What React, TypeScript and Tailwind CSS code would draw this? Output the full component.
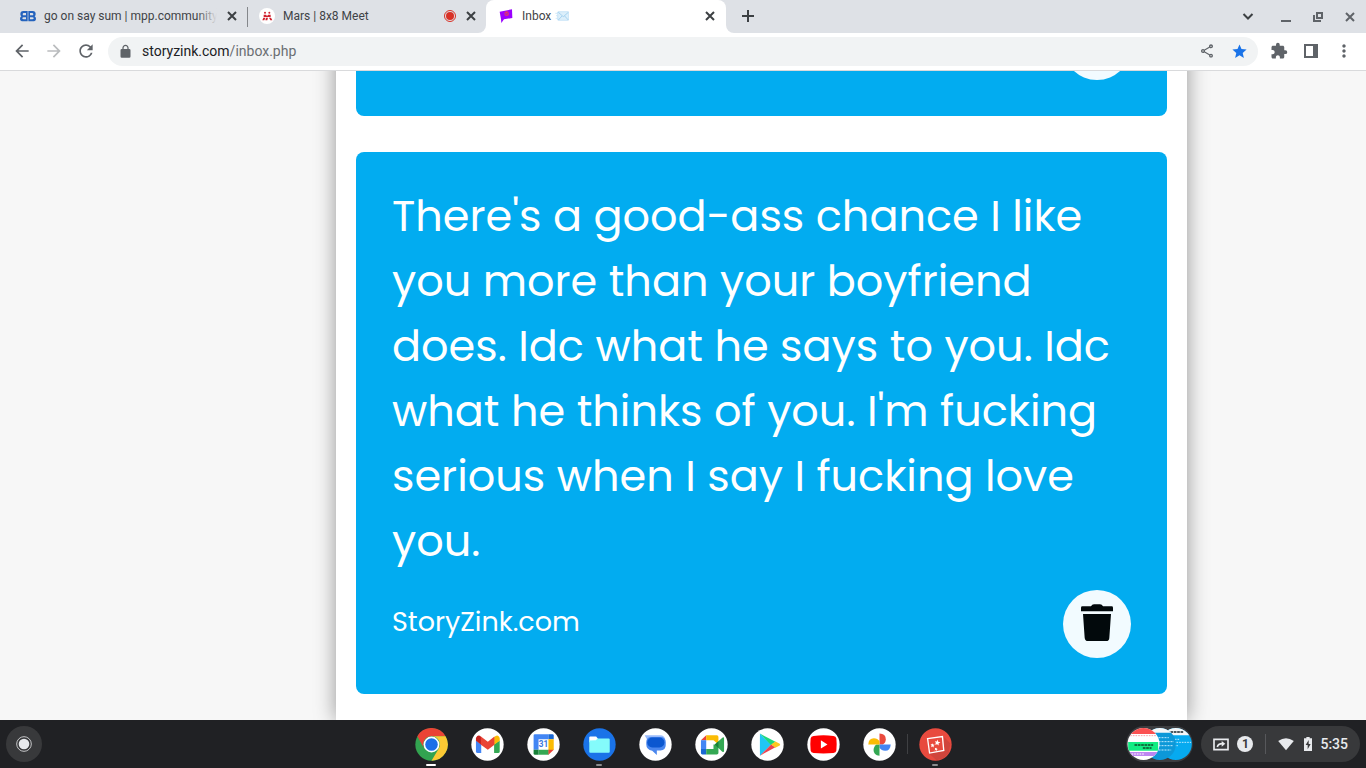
import type { ReactNode } from "react";
import {
  MdArrowBack,
  MdArrowForward,
  MdExtension,
  MdLock,
  MdMoreVert,
  MdOutlineShare,
  MdRefresh,
  MdStar,
} from "react-icons/md";

type TabProps = {
  title: string;
  icon: ReactNode;
  extra?: ReactNode;
  recording?: boolean;
  faded?: boolean;
};

type ShelfApp = {
  name: string;
  icon: ReactNode;
  indicator?: "active" | "running";
};

type StoryCardProps = {
  message?: string;
  label?: string;
};

/* Favicons */

const BBFavicon = () => (
  <svg viewBox="0 0 48 48" className="size-4 shrink-0">
    <path
      fill="#2463bd"
      fillRule="evenodd"
      d="M23 9v31H10q-10 0-10-8 0-5 4-7-3-2-3-7 0-9 9-9zM18 15h-6q-4 0-4 3.500t4 3.500h6zM18 28h-7q-4 0-4 3t4 3h7zM25 9v31h13q10 0 10-8 0-5-4-7 3-2 3-7 0-9-9-9zM30 15h6q4 0 4 3.500t-4 3.500h-6zM30 28h7q4 0 4 3t-4 3h-7z"
    />
  </svg>
);

const MeetFavicon = () => (
  <svg viewBox="0 0 48 48" className="size-4 shrink-0">
    <circle cx="24" cy="24" r="24" fill="#fff" />
    <g fill="#d0202e">
      <circle cx="18" cy="14" r="3" />
      <circle cx="31" cy="14" r="3" />
      <path d="M14 20h7l3 4 4-4h7v7H14zM13 29h6l-3 8h-6zM21 29h6l-2 8h-6zM30 29h6l4 8h-6z" />
    </g>
  </svg>
);

const ZinkFavicon = () => (
  <svg viewBox="0 0 48 48" className="size-4 shrink-0">
    <path d="M5 11 42 4l1 26-25 4-8 11-1-11z" fill="#9a00ff" />
    <circle cx="26" cy="17" r="7" fill="#e8306c" />
    <path d="m22 14 3 7 6-8" fill="none" stroke="#7d22e0" strokeWidth="2" />
  </svg>
);

const EnvelopeIcon = () => (
  <svg viewBox="0 0 42 30" className="h-[10px] w-[14px] shrink-0">
    <rect x="8" y="2" width="33" height="26" rx="2" fill="#dceffb" stroke="#b9ddf5" strokeWidth="2" />
    <path d="m10 4 15 13L40 4M10 27l11-12M40 27 29 15" fill="none" stroke="#8cc4ea" strokeWidth="2" />
    <path d="M1 7h6M3 14h4M2 22h5" stroke="#b9ddf5" strokeWidth="2" />
  </svg>
);

const Tab = ({ title, icon, extra, recording, faded }: TabProps) => (
  <div className="flex h-full w-[239px] items-center gap-2 pr-2 pb-px pl-3">
    {icon}
    <div className="relative flex min-w-0 flex-1 items-center gap-1 overflow-hidden pb-px text-xs whitespace-nowrap text-[#3f4347]">
      <span>{title}</span>
      {extra}
      {faded && (
        <div className="absolute inset-y-0 right-0 w-5 bg-linear-to-r from-transparent to-[#dee1e6]" />
      )}
    </div>
    {recording && (
      <svg viewBox="0 0 24 24" className="size-3 shrink-0">
        <circle cx="12" cy="12" r="11" fill="none" stroke="#d93025" strokeWidth="2" />
        <circle cx="12" cy="12" r="8" fill="#d93025" />
      </svg>
    )}
    <button aria-label={`Close ${title}`} className="shrink-0">
      <svg viewBox="0 0 14 14" className="size-3.5">
        <path d="m3 3 8 8M11 3l-8 8" stroke="#3c4043" strokeWidth="2" />
      </svg>
    </button>
  </div>
);

const TabStrip = () => (
  <div className="flex h-[33px] w-full bg-white">
    <div className="flex rounded-br-lg bg-[#dee1e6] pl-2">
      <Tab title="go on say sum | mpp.community" icon={<BBFavicon />} faded />
      <div className="-mr-px h-5 w-px self-center bg-[#84878b]" />
      <Tab title="Mars | 8x8 Meet" icon={<MeetFavicon />} recording />
    </div>
    <div className="bg-linear-to-b from-[#dee1e6] from-50% to-white to-50%">
      <div className="h-full rounded-t-lg bg-white pr-px">
        <Tab title="Inbox" icon={<ZinkFavicon />} extra={<EnvelopeIcon />} />
      </div>
    </div>
    <div className="flex flex-1 items-center justify-between rounded-bl-lg bg-[#dee1e6] pr-2 pb-px pl-4">
      <button aria-label="New tab">
        <svg viewBox="0 0 12 12" className="size-3">
          <path d="M6 0v12M0 6h12" stroke="#3c4043" strokeWidth="2" />
        </svg>
      </button>
      <div className="flex items-center text-[#5f6368]">
        <button aria-label="Search tabs" className="mr-[22px]">
          <svg viewBox="0 0 16 16" className="size-4">
            <path d="m3.500 6 4.500 4.500L12.500 6" fill="none" stroke="#3c4043" strokeWidth="2" />
          </svg>
        </button>
        <button aria-label="Minimize" className="mr-4">
          <svg viewBox="0 0 16 16" className="size-4">
            <path d="M3 13h10" stroke="currentColor" strokeWidth="2" />
          </svg>
        </button>
        <button aria-label="Restore" className="mr-4">
          <svg viewBox="0 0 16 16" className="size-4" fill="none" stroke="currentColor" strokeWidth="2">
            <path d="M7 5h5v5H7zM4 7v6h7" />
          </svg>
        </button>
        <button aria-label="Close window">
          <svg viewBox="0 0 16 16" className="size-4">
            <path d="m4 5 8 8M12 5l-8 8" stroke="currentColor" strokeWidth="2" />
          </svg>
        </button>
      </div>
    </div>
  </div>
);

const Toolbar = () => (
  <div className="flex h-[38px] items-center border-b border-[#d9dadc] bg-white px-3 text-[#5f6368]">
    <div className="flex gap-3 pb-px">
      <button aria-label="Back">
        <MdArrowBack size={20} />
      </button>
      <button aria-label="Forward" className="text-[#babcbe]">
        <MdArrowForward size={20} />
      </button>
      <button aria-label="Reload">
        <MdRefresh size={20} />
      </button>
    </div>
    <div className="ml-3 flex h-[29px] min-w-0 flex-1 items-center rounded-full bg-[#f1f3f4] px-2.5 pb-px">
      <svg viewBox="0 0 24 24" className="size-[15px]" fill="currentColor">
        <path
          fillRule="evenodd"
          d="M18 8h-1V6c0-2.760-2.240-5-5-5S7 3.240 7 6v2H6a2 2 0 0 0-2 2v10a2 2 0 0 0 2 2h12a2 2 0 0 0 2-2V10a2 2 0 0 0-2-2M9 8V6a3 3 0 0 1 6 0v2z"
        />
      </svg>
      <div className="ml-[9px] flex-1 text-sm text-[#6a6e72]">
        <span className="text-[#202124]">storyzink.com</span>/inbox.php
      </div>
      <div className="flex items-center gap-4">
        <button aria-label="Share">
          <MdOutlineShare size={16} />
        </button>
        <button aria-label="Bookmark" className="text-[#1a73e8]">
          <MdStar size={17} />
        </button>
      </div>
    </div>
    <div className="ml-3 flex items-center gap-4 pb-px">
      <button aria-label="Extensions">
        <MdExtension size={18} />
      </button>
      <button aria-label="Side panel">
        <svg viewBox="0 0 14 14" className="size-3.5">
          <path fill="currentColor" fillRule="evenodd" d="M0 0h14v14H0zM2 2v10h7V2z" />
        </svg>
      </button>
      <button aria-label="Menu">
        <MdMoreVert size={20} />
      </button>
    </div>
  </div>
);

const StoryCard = ({ message, label }: StoryCardProps) => (
  <article className="rounded-lg bg-[#02acf0] px-9 pt-8 pb-9 text-white">
    {message && <p className="text-[43px] leading-[65px]">{message}</p>}
    <div className="mt-4 flex items-start justify-between">
      <span className="pt-3 text-[27px] leading-10">{label}</span>
      <button
        aria-label="Delete story"
        className="flex size-[68px] items-center justify-center rounded-full bg-[#f2fbff]"
      >
        <svg viewBox="0 0 96 111" className="mb-1 h-[37px] w-8" fill="#02090c">
          <path d="M30 7q3-6 9-6h18q6 0 9 6h26q4 0 4 4v11H0V11q0-4 4-4zM6 30h84l-5 71q0 10-10 10H21q-9 0-10-10z" />
        </svg>
      </button>
    </div>
  </article>
);

/* Shelf icons, all drawn in a 100 unit circle */

const Disc = ({ fill = "#fff", children }: { fill?: string; children: ReactNode }) => (
  <svg viewBox="0 0 100 100" className="size-[33px]">
    <circle cx="50" cy="50" r="49" fill={fill} />
    {children}
  </svg>
);

const shelfApps: ShelfApp[] = [
  {
    name: "Chrome",
    indicator: "active",
    icon: (
      <Disc fill="#32a350">
        <path fill="#ea4335" d="M50 25h42.500A49 49 0 0 0 7 25l21.300 37.500A25 25 0 0 1 50 25" />
        <path fill="#fcc934" d="M71.700 62.500 50 99a49 49 0 0 0 42.500-74H50a25 25 0 0 1 21.700 37.500" />
        <circle cx="50" cy="50" r="24" fill="#fff" />
        <circle cx="50" cy="50" r="19" fill="#1a6fe8" />
      </Disc>
    ),
  },
  {
    name: "Gmail",
    icon: (
      <Disc>
        <path fill="#4285f4" d="M15 38l16 11v27H20q-5 0-5-5z" />
        <path fill="#34a853" d="M87 38 70 49v27h12q5 0 5-5z" />
        <path fill="#fbbc04" d="M70 28q7-8 13-4 4 3 4 8v7L70 51z" />
        <path fill="#c5221f" d="M15 39v-7q0-5 4-8 6-3 12 3v24z" />
        <path fill="#ea4335" d="m30 26 21 16 20-16v25L51 66 30 51z" />
      </Disc>
    ),
  },
  {
    name: "Calendar",
    icon: (
      <Disc>
        <path fill="#4285f4" d="M20 23q0-4 4-4h41v15H35v32H20z" />
        <path fill="#1967d2" d="M65 19h12q4 0 4 4v11H65z" />
        <path fill="#fbbc04" d="M65 34h16v33H65z" />
        <path fill="#34a853" d="M35 66h31v15H35z" />
        <path fill="#188038" d="M20 66h15v15H24q-4 0-4-4z" />
        <path fill="#ea4335" d="M65 66h16L65 81z" />
        <text x="50" y="59" fill="#3b78e0" fontSize="25" fontWeight="700" textAnchor="middle" fontFamily="Roboto, sans-serif">
          31
        </text>
      </Disc>
    ),
  },
  {
    name: "Files",
    indicator: "running",
    icon: (
      <Disc fill="#1a73e8">
        <path fill="#fff" d="M19 29q0-3 3-3h18l6 7-5 10H19z" />
        <path fill="#84fbfb" d="M19 38l20-1 5-5h34q3 0 3 3v37q0 3-3 3H22q-3 0-3-3z" />
      </Disc>
    ),
  },
  {
    name: "Messages",
    icon: (
      <Disc>
        <path fill="#9bbcfb" d="M17 22h46q17 0 17 17v4q0 16-16 16H40Q24 59 24 43V34z" />
        <path fill="#4a87ee" d="M38 27h27q16 0 16 17v8q0 14-16 16H54v14L40 69q-18-4-18-20v-6q0-16 16-16" />
        <rect x="25" y="29" width="52" height="30" rx="15" fill="#0b57d0" />
      </Disc>
    ),
  },
  {
    name: "Meet",
    icon: (
      <Disc>
        <path fill="#ea4335" d="M34 22v15H18z" />
        <path fill="#4285f4" d="M18 37h16v27H18z" />
        <path fill="#1967d2" d="M18 64h16v16H22q-4 0-4-4z" />
        <path fill="#fbbc04" d="M34 22h32q5 0 5 5v23L56 37H34z" />
        <path fill="#34a853" d="M56 50h15v26q0 4-5 4H34V64h22z" />
        <path fill="#34a853" d="m60 50 22-20q6-4 6 2v37q0 6-6 2z" />
        <path fill="#188038" d="M60 50 71 40v21z" />
      </Disc>
    ),
  },
  {
    name: "Play Store",
    icon: (
      <Disc>
        <path fill="#20c6f5" d="M27 17v67l34-34z" />
        <path fill="#1fd87e" d="m27 17 47 25-13 10z" />
        <path fill="#ea4351" d="m27 84 47-26-13-8z" />
        <path fill="#fcc81f" d="m74 41 13 7q3 3 0 5l-13 7-13-10z" />
      </Disc>
    ),
  },
  {
    name: "YouTube",
    icon: (
      <Disc>
        <path fill="#f00" d="M20 24q30-4 60 0 8 1 9 8 2 18 0 36-1 7-9 8-30 3-60 0-8-1-9-8-2-18 0-36 1-7 9-8" />
        <path fill="#fff" d="M42 37v25l20-12z" />
      </Disc>
    ),
  },
  {
    name: "Photos",
    icon: (
      <Disc>
        <path fill="#ea4b3e" d="M50 17q19 1 19 17 0 11-9 16H50z" />
        <path fill="#4285f4" d="M84 50q-1 19-17 19-11 0-17-9V50z" />
        <path fill="#34a853" d="M50 84q-18-1-18-17 0-11 9-17h9z" />
        <path fill="#fbbc04" d="M16 50q1-19 17-19 11 0 17 9v10z" />
      </Disc>
    ),
  },
  {
    name: "Sketch pad",
    indicator: "running",
    icon: (
      <Disc fill="#e84a3e">
        <path fill="#b8403a" opacity=".5" d="m76 27 19 20-5 28-15 16-22 7-25-23 49-4z" />
        <path fill="none" stroke="#fff" strokeWidth="4" d="m26 32 45-6 4 42-43 8z" />
        <g fill="#fff">
          <path d="m56 35 2 7 7 1-6 4 1 6-5-4-6 2 2-6-3-5 6 1zM41 46l2 4 5 1-4 3 1 5-4-3-4 2 1-5-3-4h5zM52 60l2 3 3 1-3 2v4l-3-3-4 1 2-3-1-4z" />
        </g>
      </Disc>
    ),
  },
];

// Recent screenshots stack shown in the holding space
const HoldingSpace = () => (
  <svg viewBox="0 0 200 108" className="h-9 w-[67px]">
    <rect width="200" height="108" rx="54" fill="#3c3d40" />
    <clipPath id="previewBack">
      <circle cx="149" cy="54" r="48" />
    </clipPath>
    <clipPath id="previewMiddle">
      <circle cx="101" cy="54" r="48" />
    </clipPath>
    <clipPath id="previewFront">
      <circle cx="52" cy="54" r="48" />
    </clipPath>
    <g clipPath="url(#previewBack)">
      <path fill="#06aaf0" d="M100 0h100v108H100z" />
      <path fill="#f5f7f8" d="M100 0h100v28H120z" />
      <path stroke="#17262d" strokeWidth="5" strokeDasharray="8 2" d="M133 18h40" />
      <path stroke="#bfeaff" strokeWidth="3" strokeDasharray="5 3" d="M130 40h30M135 49h60M135 59h20" />
    </g>
    <g clipPath="url(#previewMiddle)">
      <path fill="#0d98d8" d="M50 0h100v108H50z" />
      <path fill="#f5f7f8" d="M50 0h100v20H50z" />
      <path stroke="#bfeaff" strokeWidth="3" strokeDasharray="6 3" d="M97 35h31M97 47h46M97 59h42M97 72h38" />
    </g>
    <g clipPath="url(#previewFront)">
      <path fill="#fff" d="M0 0h104v108H0z" />
      <path fill="#fb5151" d="M0 0h104v24H0z" />
      <path stroke="#f6a2a8" strokeWidth="3" strokeDasharray="5 3" d="M12 29h80" />
      <path fill="#13ec83" d="M6 48h90v26H6z" />
      <path stroke="#114a2c" strokeWidth="5" strokeDasharray="8 2" d="M25 57h56M50 66h26" />
      <path fill="#bd86f1" d="M0 78h104v12H0z" />
      <path stroke="#fff" strokeWidth="3" strokeDasharray="5 3" d="M16 84h40" />
    </g>
  </svg>
);

const Shelf = () => (
  <footer className="grid h-12 shrink-0 grid-cols-[1fr_auto_1fr] items-center bg-[#202124] px-1.5">
    <button
      aria-label="Launcher"
      className="flex size-9 items-center justify-center rounded-full bg-[#38393b]"
    >
      <svg viewBox="0 0 48 48" className="size-4">
        <circle cx="24" cy="24" r="22" fill="none" stroke="#c4c5c7" strokeWidth="3" />
        <circle cx="24" cy="24" r="16" fill="#e8eaed" />
      </svg>
    </button>
    <nav className="flex h-full items-center">
      {shelfApps.map((app, index) => (
        <div key={app.name} className="relative flex h-full items-center">
          {index === shelfApps.length - 1 && <div className="absolute left-0 h-5 w-px bg-[#3f4043]" />}
          <button aria-label={app.name} className="flex w-14 justify-center">
            {app.icon}
          </button>
          {app.indicator === "active" && (
            <div className="absolute bottom-0.5 left-1/2 h-0.5 w-2.5 -translate-x-1/2 rounded-full bg-white" />
          )}
          {app.indicator === "running" && (
            <div className="absolute bottom-0.5 left-1/2 h-0.5 w-1.5 -translate-x-1/2 rounded-full bg-[#8c8d8f]" />
          )}
        </div>
      ))}
    </nav>
    <div className="flex items-center justify-end gap-2">
      <button aria-label="Recent screen captures">
        <HoldingSpace />
      </button>
      <button className="flex h-9 items-center rounded-full bg-[#38393b] px-3 text-[#e8eaed]">
        <svg viewBox="0 0 48 39" className="h-[13px] w-4" fill="none" stroke="#e8eaed" strokeWidth="5">
          <path d="M3 4h42v31H3z" />
          <path d="M13 27q2-10 15-10" />
          <path d="m26 9 11 8-11 9z" fill="#e8eaed" stroke="none" />
        </svg>
        <span className="ml-2 flex size-4 items-center justify-center rounded-full bg-[#e8eaed] text-xs font-bold text-[#38393b]">
          1
        </span>
        <span className="mx-3 h-5 w-px bg-[#57585b]" />
        <svg viewBox="0 0 48 40" className="h-[13px] w-4" fill="#e8eaed">
          <path d="M0 9Q24-8 48 9L24 38z" />
        </svg>
        <svg viewBox="0 0 24 42" className="ml-2.5 h-3.5 w-2" fill="#e8eaed">
          <path
            fillRule="evenodd"
            d="M7 0h10v4h7v38H0V4h7zM14 9 5 24h6v13l9-16h-6z"
          />
        </svg>
        <span className="ml-2 text-sm font-medium">5:35</span>
      </button>
    </div>
  </footer>
);

const App = () => {
  return (
    <div className="flex h-screen flex-col overflow-hidden bg-[#f7f7f7] font-[Roboto,sans-serif]">
      <header className="relative z-10 shrink-0">
        <TabStrip />
        <Toolbar />
      </header>

      <main className="grid min-h-0 flex-1 grid-cols-[336fr_851fr_179fr] grid-rows-[minmax(0,1fr)] items-end overflow-hidden">
        <section className="col-start-2 flex flex-col gap-9 bg-white px-5 pb-[26px] font-[Poppins,Inter,sans-serif] shadow-[0_0_20px_rgba(0,0,0,0.4)]">
          <StoryCard />
          <StoryCard
            message="There's a good-ass chance I like you more than your boyfriend does. Idc what he says to you. Idc what he thinks of you. I'm fucking serious when I say I fucking love you."
            label="StoryZink.com"
          />
        </section>
      </main>

      <Shelf />
    </div>
  );
};

export default App;
